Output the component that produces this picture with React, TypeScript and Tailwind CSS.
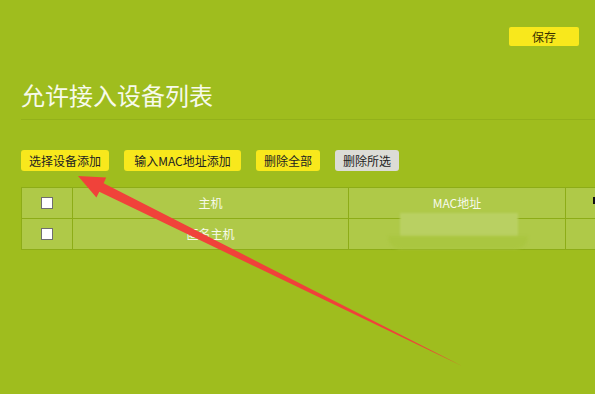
import React from "react";

export default function App() {
  const cell = "border border-[#8dac17] bg-[#afc948] p-0 text-center align-middle";
  const btn = "h-[21px] rounded-[3px] text-[12px] leading-[21px] text-[#222] text-center";
  return (
    <div className="relative w-[595px] h-[394px] overflow-hidden bg-[#9fbd1e] font-['Noto_Sans_CJK_SC',sans-serif]">
      <div className="flex justify-end pt-[27px] pr-[16px]">
        <button className="w-[70px] h-[19px] rounded-[2px] bg-[#f8e81c] text-[12px] leading-[19px] text-[#3a3300]">
          保存
        </button>
      </div>
      <h1 className="mt-[35px] ml-[21px] text-[24px] leading-[28px] font-normal text-[#f7faeb]">
        允许接入设备列表
      </h1>
      <div className="mt-[10px] ml-[21px] border-b border-[#93b11a]" />
      <div className="mt-[30px] ml-[21px] flex">
        <button className={btn + " w-[88px] bg-[#f8e81c]"}>选择设备添加</button>
        <button className={btn + " ml-[15px] w-[117px] bg-[#f8e81c]"}>输入MAC地址添加</button>
        <button className={btn + " ml-[15px] w-[64px] bg-[#f8e81c]"}>删除全部</button>
        <button className={btn + " ml-[15px] w-[64px] bg-[#dcdcd6]"}>删除所选</button>
      </div>
      <table className="mt-[16px] ml-[21px] table-fixed border-collapse w-[660px] text-[12px] text-[#f7faeb]">
        <colgroup>
          <col className="w-[51px]" />
          <col className="w-[276px]" />
          <col className="w-[217px]" />
          <col className="w-[116px]" />
        </colgroup>
        <tbody>
          <tr className="h-[31px]">
            <td className={cell}>
              <div className="mx-auto w-[12px] h-[12px] bg-white border border-[#6f6f6f]" />
            </td>
            <td className={cell}>主机</td>
            <td className={cell}>MAC地址</td>
            <td className={cell + " text-left"}>
              <div className="ml-[27px] -mt-[6px] w-[3px] h-[7px] bg-[#111]" />
            </td>
          </tr>
          <tr className="h-[31px]">
            <td className={cell}>
              <div className="mx-auto w-[12px] h-[12px] bg-white border border-[#6f6f6f]" />
            </td>
            <td className={cell}>匿名主机</td>
            <td className={cell}></td>
            <td className={cell}></td>
          </tr>
        </tbody>
      </table>

      <div className="absolute left-[400px] top-[213px] w-[118px] h-[24px] bg-[#b9d062] blur-[1px]" />
      <div className="absolute left-[388px] top-[236px] w-[140px] h-[13px] rounded-b-[20px] bg-[#aac640] blur-[1.5px]" />

      <svg className="absolute inset-0 pointer-events-none" width="595" height="394" viewBox="0 0 595 394">
        <polygon
          points="78,176 106.2,177.6 103.6,183.2 462,366 99.3,191.8 96.4,197.4"
          fill="#f0423a"
        />
      </svg>
    </div>
  );
}
